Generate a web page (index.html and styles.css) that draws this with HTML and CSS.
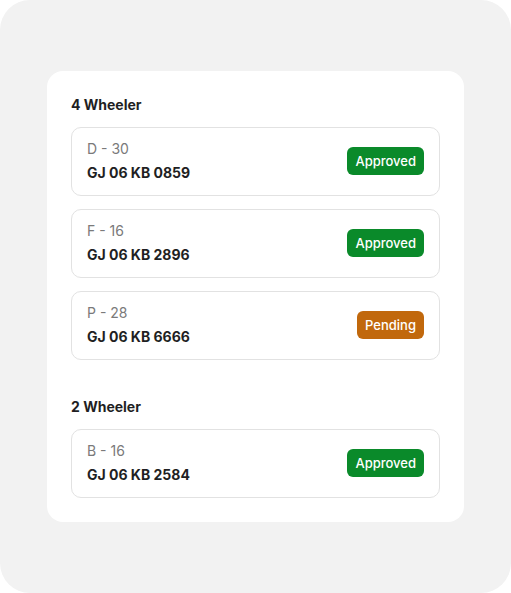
FILE: index.html
```html
<!DOCTYPE html>
<html>
<head>
<meta charset="utf-8">
<link rel="stylesheet" href="styles.css">
</head>
<body>
<div class="frame">
  <div class="panel">
    <section class="group">
      <h2 class="group-title">4 Wheeler</h2>
      <div class="list">
        <div class="item">
          <div class="info"><div class="slot">D - 30</div><div class="plate">GJ 06 KB 0859</div></div>
          <span class="badge approved">Approved</span>
        </div>
        <div class="item">
          <div class="info"><div class="slot">F - 16</div><div class="plate">GJ 06 KB 2896</div></div>
          <span class="badge approved">Approved</span>
        </div>
        <div class="item">
          <div class="info"><div class="slot">P - 28</div><div class="plate">GJ 06 KB 6666</div></div>
          <span class="badge pending">Pending</span>
        </div>
      </div>
    </section>
    <section class="group">
      <h2 class="group-title">2 Wheeler</h2>
      <div class="list">
        <div class="item">
          <div class="info"><div class="slot">B - 16</div><div class="plate">GJ 06 KB 2584</div></div>
          <span class="badge approved">Approved</span>
        </div>
      </div>
    </section>
  </div>
</div>
</body>
</html>
```
FILE: styles.css
```css
* { box-sizing: border-box; }
html, body { margin: 0; padding: 0; background: #ffffff; }
body { font-family: Inter, "Noto Sans", sans-serif; color: #1f1f23; }
.frame {
  width: 511px;
  height: 593px;
  background: #f2f2f2;
  border-radius: 30px;
  padding: 71px 47px 0 47px;
}
.panel {
  background: #ffffff;
  border-radius: 16px;
  padding: 24px 24px 24px 24px;
  display: flex;
  flex-direction: column;
  gap: 37px;
}
.group-title {
  margin: 0 0 12px 0;
  font-size: 14px;
  line-height: 20px;
  font-weight: 700;
  color: #1f1f23;
}
.list { display: flex; flex-direction: column; gap: 13px; }
.item {
  height: 69px;
  border: 1px solid #e2e2e2;
  border-radius: 10px;
  padding: 10px 15px 12px 15px;
  display: flex;
  align-items: center;
  justify-content: space-between;
}
.info { display: flex; flex-direction: column; gap: 3px; }
.slot { font-size: 14px; line-height: 21px; color: #7a7a7a; font-weight: 400; }
.plate { font-size: 14px; line-height: 21px; color: #1f1f23; font-weight: 650; }
.badge {
  height: 28px;
  border-radius: 6px;
  padding: 0 8px;
  display: inline-flex;
  align-items: center;
  color: #ffffff;
  font-size: 13px;
  font-weight: 500;
  margin-top: 1px;
}
.approved { background: #0a8a2a; }
.pending { background: #c1680c; }
```
